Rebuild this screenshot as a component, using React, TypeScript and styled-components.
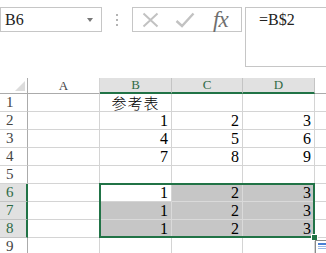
import React from "react";
import styled, { createGlobalStyle } from "styled-components";

const Global = createGlobalStyle`
  html, body { margin: 0; padding: 0; background: #fff; overflow: hidden; }
  body { width: 326px; height: 253px; font-family: "Liberation Serif", "Noto Sans CJK SC", serif; }
`;

const Page = styled.div`
  display: flex;
  flex-direction: column;
  width: 326px;
  height: 253px;
  overflow: hidden;
`;

const FormulaBar = styled.div`
  display: flex;
  align-items: flex-start;
  height: 78px;
  padding-top: 7px;
  box-sizing: border-box;
  flex-shrink: 0;
`;

const NameBox = styled.div`
  width: 102px;
  height: 25px;
  box-sizing: border-box;
  border: 1px solid #c6c6c6;
  display: flex;
  align-items: center;
  justify-content: space-between;
  padding: 0 8px 0 4px;
  font-size: 16px;
  color: #222;
  flex-shrink: 0;
`;

const Caret = styled.span`
  width: 0;
  height: 0;
  border-left: 3px solid transparent;
  border-right: 3px solid transparent;
  border-top: 4px solid #777;
`;

const Dots = styled.div`
  display: flex;
  flex-direction: column;
  gap: 3px;
  margin: 7px 0 0 14px;
  flex-shrink: 0;
`;

const Dot = styled.span`
  width: 2px;
  height: 2px;
  background: #b4b4b4;
`;

const FxBox = styled.div`
  width: 110px;
  height: 25px;
  box-sizing: border-box;
  border: 1px solid #c6c6c6;
  margin-left: 14px;
  display: flex;
  align-items: center;
  padding-left: 9px;
  gap: 16px;
  flex-shrink: 0;
`;

const FxText = styled.span`
  font-family: "Liberation Serif", serif;
  font-style: italic;
  font-size: 23px;
  line-height: 22px;
  color: #6f6f6f;
  margin-left: 2px;
  letter-spacing: -1px;
`;

const FormulaBox = styled.div`
  width: 110px;
  height: 60px;
  box-sizing: border-box;
  border: 1px solid #c6c6c6;
  margin-left: 3px;
  padding: 3px 0 0 13px;
  font-size: 16px;
  line-height: 18px;
  color: #222;
  flex-shrink: 0;
`;

const Grid = styled.div`
  display: grid;
  grid-template-columns: 28px 72px 72px 71px 72px 40px;
  grid-template-rows: 16px repeat(9, 18px);
  flex-shrink: 0;
`;

type Pos = { $r: number; $c: number };

const Corner = styled.div`
  grid-row: 1;
  grid-column: 1;
  border-right: 1px solid #ababab;
  border-bottom: 1px solid #ababab;
  box-sizing: border-box;
  display: flex;
  align-items: flex-end;
  justify-content: flex-end;
  padding: 0 2px 2px 0;
`;

const ColHead = styled.div<{ $sel?: boolean; $c: number }>`
  grid-row: 1;
  grid-column: ${(p) => p.$c};
  box-sizing: border-box;
  background: ${(p) => (p.$sel ? "#e1e1e1" : "#fff")};
  border-right: 1px solid ${(p) => (p.$sel ? "#c4c4c4" : "#d4d4d4")};
  border-bottom: ${(p) => (p.$sel ? "2px solid #217346" : "1px solid #ababab")};
  display: flex;
  align-items: center;
  justify-content: center;
  font-size: 13px;
  line-height: 14px;
  color: ${(p) => (p.$sel ? "#2f6a45" : "#444")};
`;

const RowHead = styled.div<{ $sel?: boolean; $r: number }>`
  grid-row: ${(p) => p.$r};
  grid-column: 1;
  box-sizing: border-box;
  background: ${(p) => (p.$sel ? "#e1e1e1" : "#fff")};
  border-right: ${(p) => (p.$sel ? "2px solid #217346" : "1px solid #ababab")};
  border-bottom: 1px solid ${(p) => (p.$sel ? "#c4c4c4" : "#d4d4d4")};
  display: flex;
  align-items: center;
  padding-left: 6px;
  font-size: 15px;
  color: ${(p) => (p.$sel ? "#2f6a45" : "#444")};
`;

const Cell = styled.div<Pos & { $sel?: boolean; $align?: "right" | "center" }>`
  grid-row: ${(p) => p.$r};
  grid-column: ${(p) => p.$c};
  box-sizing: border-box;
  background: ${(p) => (p.$sel ? "#c6c6c6" : "#fff")};
  border-right: 1px solid ${(p) => (p.$sel ? "#dadada" : "#d4d4d4")};
  border-bottom: 1px solid ${(p) => (p.$sel ? "#dadada" : "#d4d4d4")};
  display: flex;
  align-items: center;
  justify-content: ${(p) => (p.$align === "center" ? "center" : "flex-end")};
  padding: 0 3px;
  font-size: 16px;
  line-height: 17px;
  color: #000;
  white-space: nowrap;
`;

const CjkText = styled.span`
  font-family: "Noto Sans CJK SC", sans-serif;
  font-weight: 300;
  font-size: 15px;
  letter-spacing: 1px;
`;

const Selection = styled.div`
  grid-column: 3 / 6;
  grid-row: 7 / 10;
  margin: -1px 0 0 -1px;
  border: 2px solid #217346;
  box-sizing: border-box;
  position: relative;
  pointer-events: none;
  z-index: 2;
`;

const FillHandle = styled.span`
  position: absolute;
  right: -5px;
  bottom: -5px;
  width: 5px;
  height: 5px;
  background: #217346;
  border: 1px solid #fff;
`;

const QuickIcon = styled.span`
  position: absolute;
  left: calc(100% + 2px);
  top: calc(100% + 4px);
  display: block;
  width: 14px;
  height: 14px;
`;

const cols = ["A", "B", "C", "D", "E"];
const data: Record<number, (string | null)[]> = {
  1: [null, "参考表", null, null, null],
  2: [null, "1", "2", "3", null],
  3: [null, "4", "5", "6", null],
  4: [null, "7", "8", "9", null],
  5: [null, null, null, null, null],
  6: [null, "1", "2", "3", null],
  7: [null, "1", "2", "3", null],
  8: [null, "1", "2", "3", null],
  9: [null, null, null, null, null],
};

export default function App() {
  return (
    <Page>
      <Global />
      <FormulaBar>
        <NameBox>
          <span>B6</span>
          <Caret />
        </NameBox>
        <Dots>
          <Dot />
          <Dot />
          <Dot />
        </Dots>
        <FxBox>
          <svg width="17" height="16" viewBox="0 0 17 16">
            <path d="M1.5 1.5 L15.5 14.5 M15.5 1.5 L1.5 14.5" stroke="#c2c2c2" strokeWidth="2" fill="none" />
          </svg>
          <svg width="20" height="16" viewBox="0 0 20 16">
            <path d="M1.5 9 L7 14 L18.5 1.5" stroke="#c2c2c2" strokeWidth="2.4" fill="none" />
          </svg>
          <FxText>fx</FxText>
        </FxBox>
        <FormulaBox>=B$2</FormulaBox>
      </FormulaBar>
      <Grid>
        <Corner>
          <svg width="10" height="10" viewBox="0 0 10 10">
            <path d="M10 0 L10 10 L0 10 Z" fill="#dcdcdc" />
          </svg>
        </Corner>
        {cols.map((c, i) => (
          <ColHead key={c} $c={i + 2} $sel={c === "B" || c === "C" || c === "D"}>
            {c === "E" ? "" : c}
          </ColHead>
        ))}
        {Array.from({ length: 9 }, (_, i) => i + 1).map((r) => (
          <React.Fragment key={r}>
            <RowHead $r={r + 1} $sel={r >= 6 && r <= 8}>
              {r}
            </RowHead>
            {data[r].map((v, ci) => {
              const inSel = r >= 6 && r <= 8 && ci >= 1 && ci <= 3 && !(r === 6 && ci === 1);
              const isCjk = r === 1 && ci === 1;
              return (
                <Cell key={ci} $r={r + 1} $c={ci + 2} $sel={inSel} $align={isCjk ? "center" : "right"}>
                  {isCjk ? <CjkText>{v}</CjkText> : v}
                </Cell>
              );
            })}
          </React.Fragment>
        ))}
        <Selection>
          <FillHandle />
          <QuickIcon>
            <svg width="14" height="14" viewBox="0 0 14 14">
              <rect x="0.5" y="0.5" width="13" height="13" fill="#fff" stroke="#8a8a8a" />
              <rect x="3" y="3" width="8" height="2" fill="#4a7fd4" />
              <rect x="3" y="6" width="8" height="1" fill="#9bb8e6" />
              <rect x="3" y="8" width="8" height="1" fill="#9bb8e6" />
            </svg>
          </QuickIcon>
        </Selection>
      </Grid>
    </Page>
  );
}
